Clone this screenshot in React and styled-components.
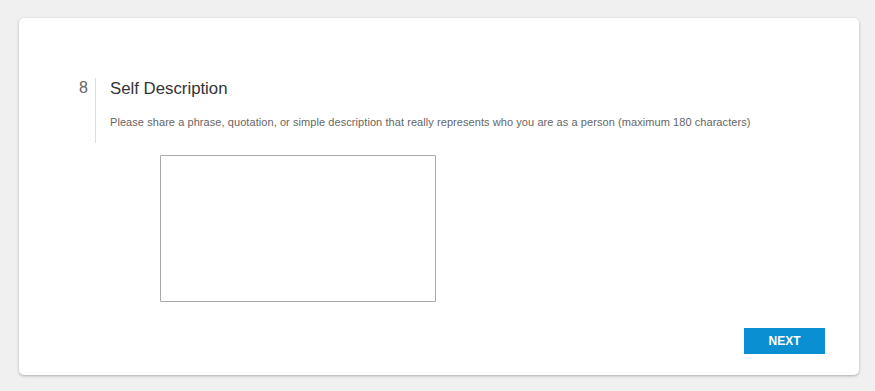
import styled, { createGlobalStyle } from "styled-components";

const GlobalStyle = createGlobalStyle`
  html, body {
    margin: 0;
    padding: 0;
    background: #f0f0f0;
    font-family: "Liberation Sans", Arial, sans-serif;
  }
`;

const Page = styled.div`
  padding: 18px 16px 16px 19px;
  min-height: 391px;
  box-sizing: border-box;
`;

const Card = styled.div`
  width: 840px;
  height: 357px;
  box-sizing: border-box;
  background: #fff;
  border-radius: 5px;
  box-shadow: 0 1px 3px rgba(0, 0, 0, 0.28);
  padding: 60px 34px 21px 0;
  display: flex;
  flex-direction: column;
`;

const Question = styled.div`
  display: flex;
  align-items: flex-start;
`;

const Number = styled.div`
  width: 69px;
  text-align: right;
  padding-right: 7px;
  font-size: 16px;
  line-height: 20px;
  color: #666;
`;

const Body = styled.div`
  border-left: 1px solid #ddd;
  padding: 0 0 14px 14px;
`;

const Title = styled.h2`
  margin: 0;
  font-size: 16.8px;
  font-weight: 400;
  line-height: 22px;
  color: #333;
`;

const Hint = styled.p`
  margin: 15px 0 0;
  font-size: 11px;
  letter-spacing: 0.07px;
  line-height: 14px;
  color: #666;
`;

const Answer = styled.textarea`
  display: block;
  margin: 12px 0 0 141px;
  width: 276px;
  height: 147px;
  box-sizing: border-box;
  border: 1px solid #a9a9a9;
  border-radius: 1px;
  resize: none;
  outline: none;
  font-family: inherit;
`;

const Footer = styled.div`
  margin-top: auto;
  display: flex;
  justify-content: flex-end;
`;

const NextButton = styled.button`
  width: 81px;
  height: 26px;
  border: none;
  background: #0b8fd3;
  color: #fff;
  font-family: inherit;
  font-size: 12px;
  font-weight: 700;
  text-transform: uppercase;
  cursor: pointer;
`;

export default function App() {
  return (
    <>
      <GlobalStyle />
      <Page>
        <Card>
          <Question>
            <Number>8</Number>
            <Body>
              <Title>Self Description</Title>
              <Hint>
                Please share a phrase, quotation, or simple description that
                really represents who you are as a person (maximum 180
                characters)
              </Hint>
            </Body>
          </Question>
          <Answer />
          <Footer>
            <NextButton>Next</NextButton>
          </Footer>
        </Card>
      </Page>
    </>
  );
}
